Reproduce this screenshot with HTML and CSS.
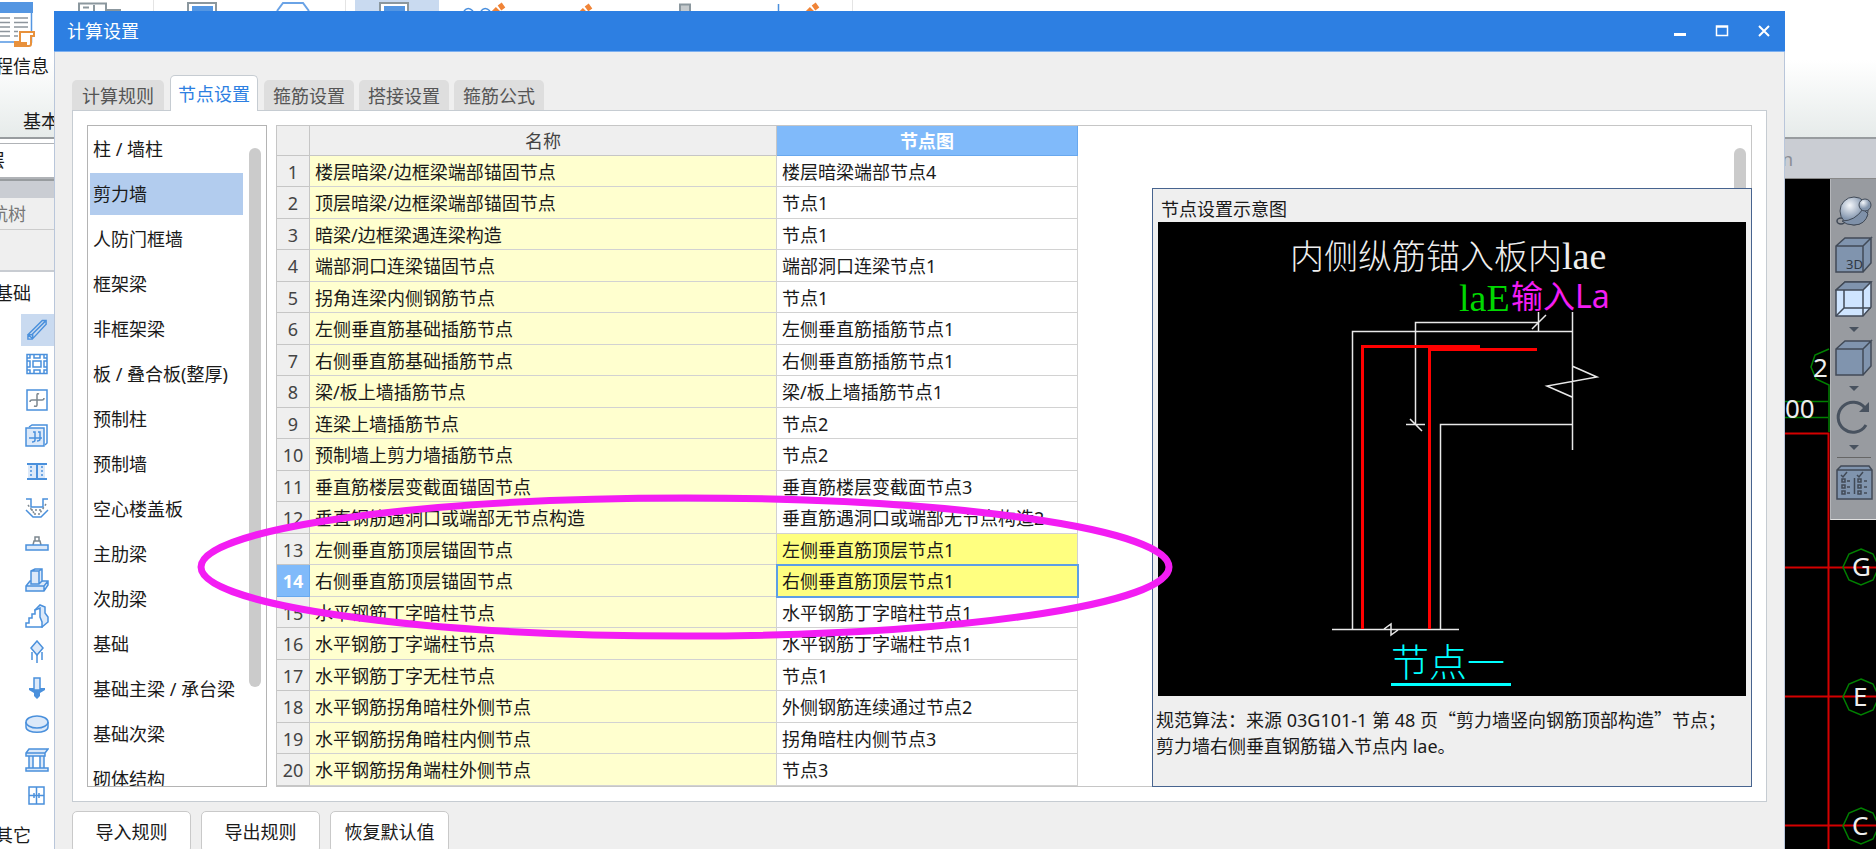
FILE: index.html
```html
<!DOCTYPE html>
<html lang="zh-CN">
<head>
<meta charset="utf-8">
<title>计算设置</title>
<link rel="stylesheet" href="styles.css">
</head>
<body>
<div class="app">
  <header class="ribbon">
    <div class="ribbon-group">
      <svg class="project-icon" width="36" height="48" viewBox="0 0 36 48">
        <path d="M0 3H31.500V42H0" fill="#fff" stroke="#5496e2" stroke-width="1.500"/>
        <path d="M0 2H33V13H0z" fill="#5496e2"/>
        <path d="M0 18H10M0 22.500H10M0 27H10M0 31.500H10M0 36H10M14 18H28M14 22.500H28M14 27H28M14 31.500H18M14 36H18" stroke="#8d959c" stroke-width="1.500"/>
        <path d="M20 32h14v4h-3v8q0 2-2 2H15v-4h5z" fill="#fff" stroke="#e8913c" stroke-width="2"/>
        <path d="M15 42h12v4H15z" fill="#e8913c"/>
      </svg>
      <span class="project-label">工程信息</span>
      <span class="group-label">基本</span>
    </div>
    <svg class="ribbon-tools" width="800" height="11" viewBox="54 0 800 11">
      <g fill="none" stroke="#8b979e" stroke-width="2">
        <path d="M79 11V3.500H106V11M107 10H121M83 7.500H89M94 5V11"/>
        <path d="M188 11V3H216V11"/>
      </g>
      <path d="M355 0H439V11H355z" fill="#c9daf0"/>
      <path d="M380 12V3H408V12" fill="#fff" stroke="#8b979e" stroke-width="2"/>
      <path d="M192 6H213V11H192zM384 6H405V11H384z" fill="#5496e2"/>
      <path d="M277 11L283 3H303L309 11" fill="none" stroke="#6aa3e6" stroke-width="2"/>
      <path d="M464 11Q468 6 473 11M481 11Q485 6 490 11M778.500 4V11" fill="none" stroke="#4a8fdd" stroke-width="1.500"/>
      <g stroke="#f08437" stroke-width="6">
        <path d="M494 13L498 9M499.500 8L503.500 5"/>
        <path d="M581 14L585 10M586.500 9L590.500 6"/>
        <path d="M808 13L812 9M813.500 8L817.500 5"/>
      </g>
      <path d="M680 12V4.500H690V12" fill="#c5cacd" stroke="#8b979e" stroke-width="2"/>
      <path d="M153.500 0V11M345.500 0V11M852.500 0V11" stroke="#e4e4e4"/>
    </svg>
  </header>

  <div class="body">
    <nav class="sidebar">
      <div class="floor"><span>首层</span></div>
      <div class="strip"></div>
      <div class="tree-title"><span>导航树</span></div>
      <div class="tree-tools"></div>
      <div class="tree-group"><span>基础</span></div>
      <ul class="tree-icons">
        <li class="current"><svg viewBox="0 0 24 24"><path d="M2 17L17 2h4v4L7 21zM2 17h5v4M2 17v4.500h5M6 17L20 3" class="l"/></svg></li>
        <li><svg viewBox="0 0 24 24"><path d="M2 2.500H22V21.500H2zM5 2.500V6H2M9 2.500V6H15V2.500M19 2.500V6H22M2 9H5V15H2M22 9H19V15H22M2 18H5V21.500M9 21.500V18H15V21.500M19 21.500V18H22M8 9H16V15H8z" class="l"/></svg></li>
        <li><svg viewBox="0 0 24 24"><path d="M2 2H22V22H2z" class="l"/><path d="M5 14q0-2 2-2H17q2 0 2-2M14 6q-2-1-2 1V17q0 2-3 1" class="g"/></svg></li>
        <li><svg viewBox="0 0 24 24"><path d="M4 3L7 1H22V19L20 21" class="l"/><path d="M1 4H19V22H1z" class="f"/><path d="M4 14H17M8 8h2v8q0 2-3 2M13 8h2v7q0 2-3 2" class="l"/></svg></li>
        <li><svg viewBox="0 0 24 24"><path d="M3 4H20V19H3z" fill="#dce9f9"/><path d="M2 4H22M2 19H22M12 4V19" class="l b"/><path d="M6 6V18M17 6V18" class="l d"/></svg></li>
        <li><svg viewBox="0 0 24 24"><path d="M1 3H6V11H18V3H23M1 14L8 21H16L23 14" class="l"/><path d="M3 9L9 17M6 14H18M21 8L15 17M9 18H15" class="g d"/></svg></li>
        <li><svg viewBox="0 0 24 24"><path d="M8 13L9 9H15L16 13M10 9V5H14V9" class="g"/><path d="M1 13H23V18H1z" class="f"/></svg></li>
        <li><svg viewBox="0 0 24 24"><path d="M1 18L5 13H19L23 13V17L19 23H1zM1 18H19V23M19 18L23 13" class="f"/><path d="M6 3L10 1H17V13L14 16H6zM6 3H14V16M14 3L17 1" class="f"/></svg></li>
        <li><svg viewBox="0 0 24 24"><path d="M10 6L15 1L20 3V9L23 13V18L17 23z" class="f"/><path d="M1 23V19H4V14H7V10H10V6L15 4V13L17 18V23z" fill="#fff" stroke="#4a90dc" stroke-width="1.500"/></svg></li>
        <li><svg viewBox="0 0 24 24"><path d="M6 8L12 1L18 8L12 15z" class="f"/><path d="M7 12V20M12 15V23M17 12V20" class="l"/></svg></li>
        <li><svg viewBox="0 0 24 24"><path d="M9 2H15V14H9z" class="f"/><path d="M4 12H9V14H15V12H20V14L15 17V20L12 23L9 20V17L4 14z" fill="#4a90dc"/></svg></li>
        <li><svg viewBox="0 0 24 24"><path d="M1 10V15C1 22 23 22 23 15V10" class="f"/><ellipse cx="12" cy="10" rx="11" ry="6" class="f"/></svg></li>
        <li><svg viewBox="0 0 24 24"><path d="M1 5L4 1H23L20 5V8H1zM1 5H20M4 8V20H8V8M15 8V20H19V8M1 20H23V23H1z" class="f"/></svg></li>
        <li><svg viewBox="0 0 24 24"><path d="M4 3H19V20H4zM4 11.500H19M11.500 3V20M9 9V14M14 9V14" class="l"/></svg></li>
      </ul>
      <div class="tree-group"><span>其它</span></div>
    </nav>

    <main class="workspace">
      <div class="doc-tabs"><span>n</span></div>
      <div class="canvas">
        <svg class="axes" width="91" height="671" viewBox="1785 178 91 671">
          <g fill="none" stroke="#008000" stroke-width="1.500">
            <path d="M1829 348L1815 354L1811 366L1816 378L1829 384V431M1785 400.500H1828M1785 416.500H1828"/>
          </g>
          <path d="M1785 432.500H1828.500V849M1785 566.500H1876M1785 695.500H1876M1785 824.500H1876" fill="none" stroke="#d40000" stroke-width="2"/>
          <g fill="none" stroke="#008000" stroke-width="1.500">
            <path id="bubble" d="M1861 548L1873 553L1879 566L1873 579L1861 584L1849 579L1843 566L1849 553z"/>
            <use href="#bubble" y="130"/>
            <use href="#bubble" y="259"/>
          </g>
          <g class="axis-text">
            <text x="1813" y="376">2</text>
            <text x="1785" y="417">00</text>
            <text x="1852" y="575">G</text>
            <text x="1853" y="705">E</text>
            <text x="1852" y="834">C</text>
          </g>
        </svg>
        <div class="view-tools">
          <button class="tool" aria-label="动态观察"><svg width="38" height="38" viewBox="0 0 38 38"><defs><radialGradient id="ball" cx=".35" cy=".3"><stop offset="0" stop-color="#f4f7fb"/><stop offset="1" stop-color="#8395ad"/></radialGradient></defs><ellipse cx="6" cy="29" rx="4" ry="3" fill="none" stroke="#414a57" stroke-width="1.500"/><circle cx="19" cy="19" r="14" fill="url(#ball)" stroke="#414a57"/><path d="M7 29Q20 29 28 17L33 22Q30 33 19 33Q11 33 7 29z" fill="#7f91a9" stroke="#414a57"/><circle cx="30" cy="13" r="6" fill="url(#ball)" stroke="#414a57"/></svg></button>
          <button class="tool" aria-label="三维"><svg width="38" height="38" viewBox="0 0 38 38"><path d="M1 10L10 2H36L28 10V36H1zM28 10H1M28 10L36 2V27L28 36" class="cube"/><text x="11" y="33" class="tag">3D</text></svg></button>
          <button class="tool" aria-label="线框"><svg width="38" height="38" viewBox="0 0 38 38"><path d="M1 10L10 2H36V27L28 36H1z" class="cube glass"/><path d="M1 10L10 2H36L28 10z" class="cube"/><path d="M28 10V36M9 10V28H36M9 28L1 36" class="cube none"/></svg></button>
          <span class="arrow"></span>
          <button class="tool" aria-label="实体"><svg width="38" height="38" viewBox="0 0 38 38"><path d="M1 10L10 2H36L28 10V36H1zM28 10H1M28 10L36 2V27L28 36" class="cube"/></svg></button>
          <span class="arrow"></span>
          <button class="tool" aria-label="旋转"><svg width="38" height="38" viewBox="0 0 38 38"><path d="M31 27A15 15 0 1 1 30 10" fill="none" stroke="#48525f" stroke-width="3"/><path d="M34 4V14H24z" fill="#48525f"/></svg></button>
          <span class="arrow"></span>
          <span class="rule"></span>
          <button class="tool" aria-label="显示设置"><svg width="38" height="38" viewBox="0 0 38 38"><path d="M2 7L6 3H34L37 7V36H2zM2 7H37" class="cube"/><path d="M6 12L8 14L12 9M22 12L24 14L28 9M19.500 15V31M12 18H15M12 24H15M12 30H15M29 18H32M29 24H32M29 30H32" class="cube none"/><path d="M7 16h3v3h-3zM7 22h3v3h-3zM7 28h3v3h-3zM23 16h3v3h-3zM23 22h3v3h-3zM23 28h3v3h-3z" class="cube none"/></svg></button>
        </div>
      </div>
    </main>
  </div>

  <section class="dialog" role="dialog" aria-labelledby="dialog-title">
    <div class="titlebar">
      <h1 id="dialog-title">计算设置</h1>
      <div class="window-buttons">
        <button aria-label="最小化"><svg width="14" height="14" viewBox="0 0 14 14"><path d="M1 10.500H13" class="bar"/></svg></button>
        <button aria-label="最大化"><svg width="14" height="14" viewBox="0 0 14 14"><path d="M1.500 2H12.500V11.500H1.500zM1.500 3H12.500"/></svg></button>
        <button aria-label="关闭"><svg width="14" height="14" viewBox="0 0 14 14"><path d="M2 2L12 12M12 2L2 12" class="cross"/></svg></button>
      </div>
    </div>

    <div class="dialog-body">
      <div class="tabs" role="tablist">
        <button class="tab" role="tab">计算规则</button>
        <button class="tab active" role="tab" aria-selected="true">节点设置</button>
        <button class="tab" role="tab">箍筋设置</button>
        <button class="tab" role="tab">搭接设置</button>
        <button class="tab" role="tab">箍筋公式</button>
      </div>

      <div class="panel">
        <div class="list-frame">
          <div class="list-view">
            <ul class="types">
              <li>柱 / 墙柱</li>
              <li class="selected">剪力墙</li>
              <li>人防门框墙</li>
              <li>框架梁</li>
              <li>非框架梁</li>
              <li>板 / 叠合板(整厚)</li>
              <li>预制柱</li>
              <li>预制墙</li>
              <li>空心楼盖板</li>
              <li>主肋梁</li>
              <li>次肋梁</li>
              <li>基础</li>
              <li>基础主梁 / 承台梁</li>
              <li>基础次梁</li>
              <li>砌体结构</li>
            </ul>
            <div class="thumb"></div>
          </div>
        </div>

        <div class="grid-frame">
          <table class="nodes">
            <colgroup><col class="c-num"><col class="c-name"><col class="c-node"></colgroup>
            <thead><tr><th></th><th>名称</th><th class="hot">节点图</th></tr></thead>
            <tbody>
              <tr><th>1</th><td>楼层暗梁/边框梁端部锚固节点</td><td>楼层暗梁端部节点4</td></tr>
              <tr><th>2</th><td>顶层暗梁/边框梁端部锚固节点</td><td>节点1</td></tr>
              <tr><th>3</th><td>暗梁/边框梁遇连梁构造</td><td>节点1</td></tr>
              <tr><th>4</th><td>端部洞口连梁锚固节点</td><td>端部洞口连梁节点1</td></tr>
              <tr><th>5</th><td>拐角连梁内侧钢筋节点</td><td>节点1</td></tr>
              <tr><th>6</th><td>左侧垂直筋基础插筋节点</td><td>左侧垂直筋插筋节点1</td></tr>
              <tr><th>7</th><td>右侧垂直筋基础插筋节点</td><td>右侧垂直筋插筋节点1</td></tr>
              <tr><th>8</th><td>梁/板上墙插筋节点</td><td>梁/板上墙插筋节点1</td></tr>
              <tr><th>9</th><td>连梁上墙插筋节点</td><td>节点2</td></tr>
              <tr><th>10</th><td>预制墙上剪力墙插筋节点</td><td>节点2</td></tr>
              <tr><th>11</th><td>垂直筋楼层变截面锚固节点</td><td>垂直筋楼层变截面节点3</td></tr>
              <tr><th>12</th><td>垂直钢筋遇洞口或端部无节点构造</td><td>垂直筋遇洞口或端部无节点构造2</td></tr>
              <tr><th>13</th><td>左侧垂直筋顶层锚固节点</td><td class="changed">左侧垂直筋顶层节点1</td></tr>
              <tr><th class="hot">14</th><td>右侧垂直筋顶层锚固节点</td><td class="changed focus">右侧垂直筋顶层节点1</td></tr>
              <tr><th>15</th><td>水平钢筋丁字暗柱节点</td><td>水平钢筋丁字暗柱节点1</td></tr>
              <tr><th>16</th><td>水平钢筋丁字端柱节点</td><td>水平钢筋丁字端柱节点1</td></tr>
              <tr><th>17</th><td>水平钢筋丁字无柱节点</td><td>节点1</td></tr>
              <tr><th>18</th><td>水平钢筋拐角暗柱外侧节点</td><td>外侧钢筋连续通过节点2</td></tr>
              <tr><th>19</th><td>水平钢筋拐角暗柱内侧节点</td><td>拐角暗柱内侧节点3</td></tr>
              <tr><th>20</th><td>水平钢筋拐角端柱外侧节点</td><td>节点3</td></tr>
            </tbody>
          </table>

          <div class="side">
            <div class="thumb-cut"></div>
            <aside class="preview">
              <h2>节点设置示意图</h2>
              <svg class="diagram" viewBox="0 0 588 474">
                <path d="M0 0H588V474H0z"/>
                <g fill="none" stroke="#e8e8e8" stroke-width="1.500">
                  <path d="M194.500 407V109.500H414.500M257.500 202V100.500H380.500M380.500 90V109M374 107L388 93M248 202.500H267M252 197L264 209"/>
                  <path d="M282.500 407V202.500H414.500M414.500 90V228M414 144L439 155L389 164L414 175M174 407.500H301M226 407L233 402V413L240 408"/>
                </g>
                <path d="M204.500 407V124.500H322M271.500 407V127.500H379" fill="none" stroke="#f00" stroke-width="3"/>
                <path d="M233 462.500H353" stroke="#0ff" stroke-width="3"/>
                <text x="132" y="47" class="cad white">内侧纵筋锚入板内<tspan class="serif">lae</tspan></text>
                <text x="301" y="89" class="serif green">laE</text>
                <text x="353" y="86" class="note">输入La</text>
                <text x="233" y="454" class="cad cyan">节点一</text>
              </svg>
              <p>规范算法：来源 03G101-1 第 48 页<span class="quote">“</span>剪力墙竖向钢筋顶部构造<span class="quote">”</span>节点；<br>剪力墙右侧垂直钢筋锚入节点内 lae。</p>
            </aside>
          </div>
        </div>
      </div>

      <div class="actions">
        <button>导入规则</button>
        <button>导出规则</button>
        <button>恢复默认值</button>
      </div>
    </div>
    <svg class="ring" width="976" height="146" viewBox="0 0 976 146"><ellipse cx="488" cy="73" rx="484" ry="69"/></svg>
  </section>
</div>
</body>
</html>
```
FILE: styles.css
```css
* { box-sizing: border-box; }
body {
  margin: 0;
  overflow: hidden;
  font-family: "Noto Sans", "Noto Sans CJK SC", sans-serif;
  font-size: 18px;
  line-height: 26px;
  color: #1a1a1a;
}
button { font: inherit; color: inherit; padding: 0; border: 0; background: none; }
ul, h1, h2, p { margin: 0; padding: 0; list-style: none; font-size: 18px; font-weight: 400; }
svg { display: block; }

/* Application behind the dialog */
.app { position: relative; display: flex; flex-direction: column; height: 100vh; overflow: hidden; }
.ribbon {
  display: flex;
  height: 139px;
  flex: none;
  background: linear-gradient(#fff 60px, #e6ebea 137px);
  border-bottom: 2px solid #989c9f;
}
.ribbon-group { width: 54px; overflow: hidden; display: flex; flex-direction: column; }
.project-label { width: 49px; margin-top: 5px; display: flex; justify-content: flex-end; white-space: nowrap; }
.group-label { margin: 29px 0 0 23px; white-space: nowrap; }
.body { display: flex; flex: 1; min-height: 0; }

.sidebar { width: 54px; overflow: hidden; background: #fff; flex: none; white-space: nowrap; }
.sidebar span { display: flex; justify-content: flex-end; }
.floor { height: 36px; margin-top: 4px; padding: 3px 0; border-bottom: 2px solid #b0b3b7; border-top: 1px solid #b0b3b7; }
.floor span { width: 5px; }
.strip { height: 19px; background: #cacdd3; border-top: 2px solid #989c9f; }
.tree-title { height: 32px; padding: 3px 0; background: #efefef; border-bottom: 1px solid #ccc; color: #777; }
.tree-title span { width: 26px; }
.tree-tools { height: 42px; background: #efefef; border-bottom: 2px solid #c8ccd2; }
.tree-group { height: 42px; padding: 8px 0; }
.tree-group span { width: 31px; }
.tree-icons li { height: 36px; display: flex; justify-content: flex-end; align-items: center; }
.tree-icons li svg { width: 24px; height: 24px; margin: 0 5px; }
.tree-icons li.current { height: 32px; margin-left: 21px; background: #c9daf0; }
.l { fill: none; stroke: #4a90dc; stroke-width: 1.5; }
.f { fill: #dce9f9; stroke: #4a90dc; stroke-width: 1.5; }
.g { fill: none; stroke: #7d8890; stroke-width: 1.5; }
.b { stroke-width: 2; }
.d { stroke-dasharray: 2 2; }

.workspace { flex: 1; display: flex; flex-direction: column; background: #000; }
.doc-tabs { height: 40px; padding: 7px 83px; text-align: right; background: #cacdd3; color: #8a8d95; border-bottom: 1px solid #888; }
.canvas { flex: 1; position: relative; display: flex; justify-content: flex-end; align-items: flex-start; overflow: hidden; }
.axis-text { fill: #eee; font-size: 26px; }
.view-tools {
  position: absolute; top: 0; right: 0; width: 46px; height: 341px; padding-top: 10px;
  background: #989ba0; border-left: 1px solid #b4b6ba; border-bottom: 1px solid #e0e0e0;
  display: flex; flex-direction: column; align-items: center;
}
.tool { height: 44px; flex: none; }
.arrow { flex: none; border: 5px solid transparent; border-top-color: #48525f; border-bottom: 0; margin: 6px 0 4px; }
.rule { flex: none; width: 34px; height: 1px; background: #666; margin: 3px 0 2px; }
.cube { fill: #8094ae; stroke: #414a57; stroke-width: 1.5; }
.glass { fill: #cfe5ff; }
.none { fill: none; }
.tag { font-size: 13px; fill: #2f3844; }

/* Dialog */
.dialog {
  position: absolute; top: 11px; left: 54px; right: 91px; bottom: -20px;
  background: #efefef;
  border: solid #b9c6da; border-width: 0 1px;
}
.titlebar {
  display: flex; align-items: center; justify-content: space-between;
  height: 41px; margin: 0 -1px; padding: 0 14px 0 13px;
  background: #2d7fe2; border-bottom: 1px solid #7db0f0; color: #fff;
}
.window-buttons { display: flex; gap: 28px; }
.window-buttons path { fill: none; stroke: #fff; stroke-width: 1.5; }
.window-buttons .bar { stroke-width: 3; }
.window-buttons .cross { stroke-width: 2; }
.dialog-body { padding: 23px 17px 0; }

.tabs { display: flex; align-items: flex-end; gap: 5px; height: 36px; margin-bottom: -1px; position: relative; }
.tab { height: 30px; padding: 1px 10px 0; margin-bottom: 1px; background: #dedede; border-radius: 5px 5px 0 0; color: #555; }
.tab.active { height: 36px; padding: 0 7px; margin: 0 1px; background: #fff; border: 1px solid #c6ccd2; border-bottom: 0; color: #2d7fe2; }
.tab.active ~ .tab { padding: 1px 9px 0; }
.panel { display: flex; gap: 9px; padding: 14px; background: #fff; border: 1px solid #c6ccd2; }

.list-frame { width: 180px; flex: none; border: 1px solid #b4b4b4; }
.list-view { height: 0; min-height: 100%; overflow: hidden; display: flex; justify-content: space-between; padding: 2px 5px 0 2px; }
.types { width: 153px; white-space: nowrap; }
.types li { height: 42px; padding: 8px 3px; margin-bottom: 3px; }
.types li.selected { background: #b2ccee; }
.thumb { width: 12px; height: 539px; margin-top: 20px; border-radius: 6px; background: #cbcbcb; }

.grid-frame { flex: 1; display: flex; justify-content: space-between; border: 1px solid #c6c6c6; }
.nodes { width: 801px; flex: none; table-layout: fixed; border-spacing: 0; white-space: nowrap; }
.c-num { width: 33px; }
.c-name { width: 467px; }
.nodes th { padding: 1px 0 0; font-weight: 400; background: #efefef; color: #444; text-align: center; border: solid #c6c6c6; border-width: 0 1px 1px 0; }
.nodes thead th { height: 30px; }
.nodes td { padding: 1px 5px 0; border: solid #d2d2d2; border-width: 0 1px 1px 0; }
.nodes tbody tr { height: 31px; }
.nodes tbody tr:nth-child(even) { height: 32px; }
.nodes td:nth-child(2) { background: #ffffcf; }
.nodes th.hot { background: #80bafa; border-color: #68a8ee; color: #fff; font-weight: 700; }
.nodes td.changed { background: #ffff80; }
.nodes td.focus { outline: 2px solid #5d9fe6; outline-offset: -1px; }

.side { width: 600px; flex: none; display: flex; flex-direction: column; margin: 0 -1px -1px 0; }
.thumb-cut { width: 12px; height: 40px; margin: 22px 6px 0; align-self: flex-end; border-radius: 6px 6px 0 0; background: #cbcbcb; }
.preview { flex: 1; padding: 7px 5px 0; background: #efefef; border: 1px solid #47648f; }
.preview h2 { padding: 0 3px; line-height: 26px; }
.preview p { padding-top: 10px; margin: 0 -2px; white-space: nowrap; }
.quote { font-family: "Noto Sans CJK SC", sans-serif; }
.diagram { width: 100%; }
.cad { font-size: 34px; font-weight: 300; }
.serif { font-family: "Liberation Serif", serif; font-size: 38px; }
.white { fill: #eee; }
.green { fill: #00d800; }
.cyan { fill: #0ff; font-size: 38px; }
.note { fill: #f31df3; font-size: 32px; }

.actions { display: flex; gap: 10px; padding-top: 9px; }
.actions button { width: 119px; height: 42px; background: #fff; border: 1px solid #c9c9c9; border-radius: 5px; }

/* Highlight ring drawn over rows 13 and 14 */
.ring { position: absolute; left: 142px; top: 483px; fill: none; stroke: #f31df3; stroke-width: 7px; pointer-events: none; }
```
